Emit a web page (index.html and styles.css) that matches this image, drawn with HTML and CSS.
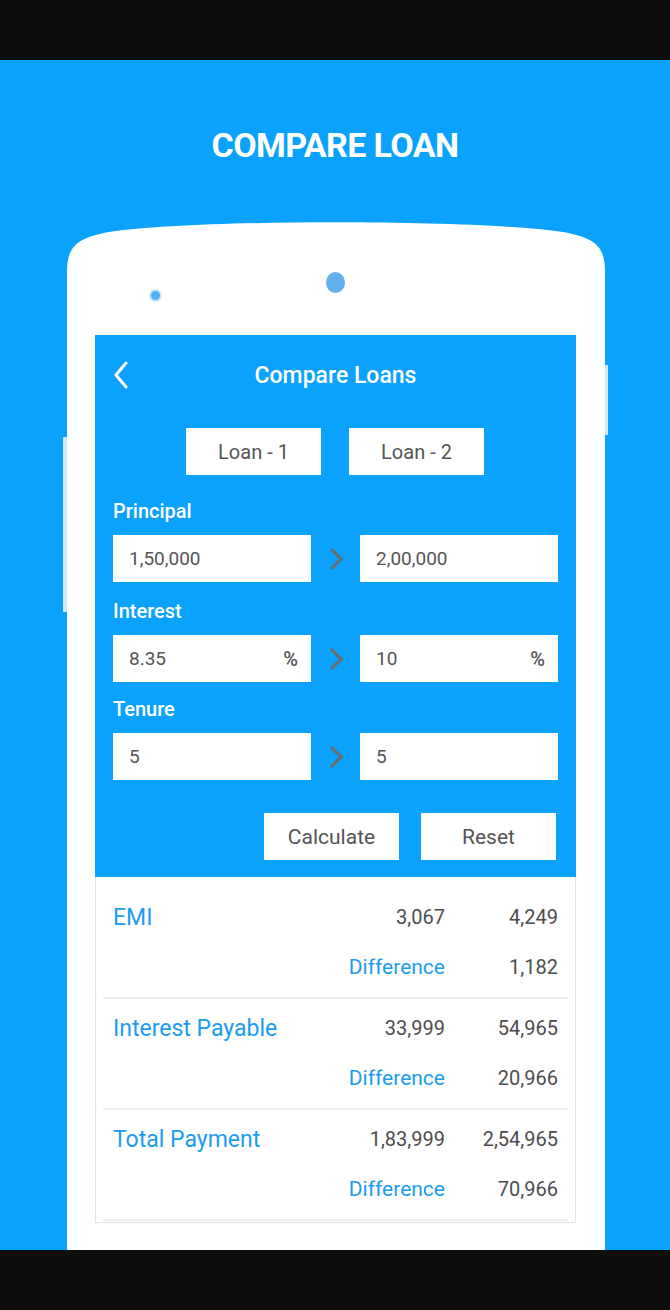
FILE: index.html
```html
<!DOCTYPE html>
<html lang="en">
<head>
<meta charset="utf-8">
<title>Compare Loan</title>
<link rel="stylesheet" href="styles.css">
</head>
<body>
<div class="bar"></div>
<main class="stage">
  <h1 class="hero-title">COMPARE LOAN</h1>
  <div class="phone">
    <span class="side side-left"></span>
    <span class="side side-right"></span>
    <svg class="phone-top" width="538" height="50" viewBox="0 0 538 50" aria-hidden="true">
      <path d="M0 50 C0 24 10 16 42 10 C130 -3 408 -3 496 10 C528 16 538 24 538 50 Z" fill="#ffffff"/>
    </svg>
    <span class="cam cam-small"></span>
    <span class="cam cam-big"></span>
    <div class="phone-body">
      <section class="screen">
        <div class="screen-head">
          <header class="appbar">
            <svg class="back" width="16" height="28" viewBox="0 0 16 28" aria-hidden="true">
              <polyline points="13,2 3,14 13,26" fill="none" stroke="#ffffff" stroke-width="3" stroke-linecap="round" stroke-linejoin="round"/>
            </svg>
            <span class="appbar-title">Compare Loans</span>
            <span></span>
          </header>
          <div class="loan-tabs">
            <button class="btn">Loan - 1</button>
            <button class="btn">Loan - 2</button>
          </div>
          <div class="form">
            <div class="field-label first">Principal</div>
            <div class="input-row">
              <div class="input"><span>1,50,000</span></div>
              <div class="chev"><svg width="16" height="24" viewBox="0 0 16 24"><polyline points="3,2 13,12 3,22" fill="none" stroke="#6c6c6c" stroke-width="3"/></svg></div>
              <div class="input"><span>2,00,000</span></div>
            </div>
            <div class="field-label">Interest</div>
            <div class="input-row">
              <div class="input"><span>8.35</span><span class="pct">%</span></div>
              <div class="chev"><svg width="16" height="24" viewBox="0 0 16 24"><polyline points="3,2 13,12 3,22" fill="none" stroke="#6c6c6c" stroke-width="3"/></svg></div>
              <div class="input"><span>10</span><span class="pct">%</span></div>
            </div>
            <div class="field-label tight">Tenure</div>
            <div class="input-row">
              <div class="input"><span>5</span></div>
              <div class="chev"><svg width="16" height="24" viewBox="0 0 16 24"><polyline points="3,2 13,12 3,22" fill="none" stroke="#6c6c6c" stroke-width="3"/></svg></div>
              <div class="input"><span>5</span></div>
            </div>
            <div class="actions">
              <button class="btn">Calculate</button>
              <button class="btn">Reset</button>
            </div>
          </div>
        </div>
        <div class="results">
          <div class="block">
            <div class="row">
              <span class="label">EMI</span>
              <span class="val">3,067</span>
              <span class="val">4,249</span>
            </div>
            <div class="row row2">
              <span></span>
              <span class="diff">Difference</span>
              <span class="val">1,182</span>
            </div>
          </div>
          <div class="block">
            <div class="row">
              <span class="label">Interest Payable</span>
              <span class="val">33,999</span>
              <span class="val">54,965</span>
            </div>
            <div class="row row2">
              <span></span>
              <span class="diff">Difference</span>
              <span class="val">20,966</span>
            </div>
          </div>
          <div class="block">
            <div class="row">
              <span class="label">Total Payment</span>
              <span class="val">1,83,999</span>
              <span class="val">2,54,965</span>
            </div>
            <div class="row row2">
              <span></span>
              <span class="diff">Difference</span>
              <span class="val">70,966</span>
            </div>
          </div>
        </div>
      </section>
    </div>
  </div>
</main>
<div class="bar"></div>
</body>
</html>
```
FILE: styles.css
```css
* { box-sizing: border-box; }

html, body {
  margin: 0;
  padding: 0;
}

body {
  width: 670px;
  height: 1310px;
  overflow: hidden;
  background: #0e0e0e;
  font-family: Roboto, "Noto Sans", sans-serif;
}

.bar {
  height: 60px;
  background: #0e0e0e;
}

.stage {
  height: 1190px;
  background: #0aa2fc;
  overflow: hidden;
  display: flex;
  flex-direction: column;
}

.hero-title {
  margin: 65px 0 0;
  height: 40px;
  line-height: 40px;
  text-align: center;
  color: #ffffff;
  font-size: 34px;
  font-weight: 700;
  letter-spacing: -0.6px;
}

.phone {
  position: relative;
  margin: 57px 0 0 67px;
  width: 538px;
  flex: 1;
  display: flex;
  flex-direction: column;
}

.phone-top {
  display: block;
}

.phone-body {
  flex: 1;
  background: #ffffff;
  padding: 63px 29px 0 28px;
}

.side {
  position: absolute;
  background: #cfe8fb;
}

.side-left {
  left: -4px;
  top: 215px;
  width: 4px;
  height: 175px;
}

.side-right {
  left: 538px;
  top: 143px;
  width: 3px;
  height: 70px;
}

.cam {
  position: absolute;
  border-radius: 50%;
  background: #4fb0f2;
}

.cam-small {
  left: 84px;
  top: 69px;
  width: 9px;
  height: 9px;
  box-shadow: 0 0 0 2px rgba(79, 176, 242, 0.3);
}

.cam-big {
  left: 259px;
  top: 50px;
  width: 19px;
  height: 21px;
  background: #62b1ec;
}

.screen {
  width: 481px;
}

.screen-head {
  background: #0aa2fc;
}

.appbar {
  height: 80px;
  display: grid;
  grid-template-columns: 60px 1fr 60px;
  align-items: center;
  padding-left: 18px;
}

.back {
  display: block;
}

.appbar-title {
  text-align: center;
  color: #ffffff;
  font-size: 23px;
  font-weight: 500;
  margin-left: -18px;
}

.btn {
  width: 135px;
  height: 47px;
  border: 0;
  margin: 0;
  padding: 0;
  background: #ffffff;
  color: #555555;
  font-family: Roboto, "Noto Sans", sans-serif;
  font-size: 20px;
}

.loan-tabs {
  display: flex;
  justify-content: center;
  gap: 28px;
  margin-top: 13px;
  padding-right: 1px;
}

.form {
  padding: 0 18px 17px;
}

.field-label {
  margin-top: 17px;
  line-height: 24px;
  color: #ffffff;
  font-size: 20px;
  font-weight: 500;
}

.field-label.first {
  margin-top: 24px;
}

.field-label.tight {
  margin-top: 15px;
}

.input-row {
  display: grid;
  grid-template-columns: 198px 49px 198px;
  margin-top: 12px;
  height: 47px;
}

.input {
  background: #ffffff;
  display: flex;
  align-items: center;
  justify-content: space-between;
  padding: 0 13px 0 16px;
  color: #555555;
  font-size: 19px;
}

.pct {
  font-size: 20px;
  font-weight: 500;
  color: #555555;
}

.chev {
  display: flex;
  align-items: center;
  justify-content: center;
}

.chev svg {
  display: block;
}

.actions {
  display: flex;
  justify-content: flex-end;
  gap: 22px;
  margin-top: 33px;
  padding-right: 2px;
}

.actions .btn {
  font-size: 21px;
}

.results {
  background: #ffffff;
  border: 1px solid #e3e3e3;
  border-top: 0;
  padding: 11px 7px 1px;
}

.block {
  padding: 14px 0 15px;
  border-bottom: 2px solid #eeeeee;
}

.row {
  display: grid;
  grid-template-columns: 1fr auto 113px;
  align-items: center;
  height: 30px;
  padding: 0 10px;
}

.row2 {
  margin-top: 20px;
}

.label {
  color: #1a9cf0;
  font-size: 23px;
}

.val {
  text-align: right;
  color: #4d4d4d;
  font-size: 20px;
}

.diff {
  text-align: right;
  color: #1a9cf0;
  font-size: 21px;
}
```
